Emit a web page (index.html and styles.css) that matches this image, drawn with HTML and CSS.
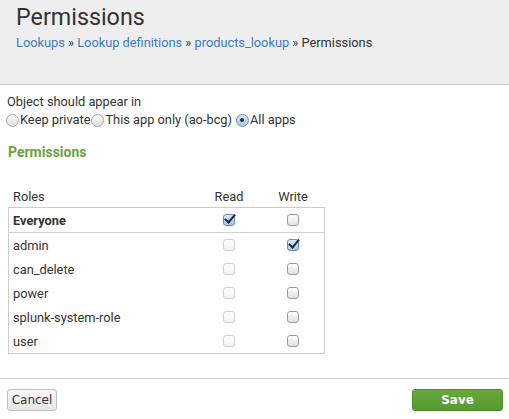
FILE: index.html
```html
<!DOCTYPE html>
<html>
<head>
<meta charset="utf-8">
<link rel="stylesheet" href="styles.css">
</head>
<body>
<div class="page">
  <header class="header">
    <h1 class="title">Permissions</h1>
    <div class="crumbs"><a>Lookups</a> » <a>Lookup definitions</a> » <a>products_lookup</a> » Permissions</div>
  </header>
  <main class="content">
    <div class="label">Object should appear in</div>
    <div class="radios">
      <span class="radio"></span><span class="rlabel">Keep private</span>
      <span class="radio"></span><span class="rlabel">This app only (ao-bcg)</span>
      <span class="radio on"></span><span class="rlabel">All apps</span>
    </div>
    <h2 class="section">Permissions</h2>
    <div class="perm">
      <div class="row head"><span class="name">Roles</span><span class="col">Read</span><span class="col">Write</span></div>
      <div class="box">
        <div class="row first"><span class="name bold">Everyone</span><span class="col"><span class="cb checked"></span></span><span class="col"><span class="cb"></span></span></div>
        <div class="row"><span class="name">admin</span><span class="col"><span class="cb dis"></span></span><span class="col"><span class="cb checked"></span></span></div>
        <div class="row"><span class="name">can_delete</span><span class="col"><span class="cb dis"></span></span><span class="col"><span class="cb"></span></span></div>
        <div class="row"><span class="name">power</span><span class="col"><span class="cb dis"></span></span><span class="col"><span class="cb"></span></span></div>
        <div class="row"><span class="name">splunk-system-role</span><span class="col"><span class="cb dis"></span></span><span class="col"><span class="cb"></span></span></div>
        <div class="row"><span class="name">user</span><span class="col"><span class="cb dis"></span></span><span class="col"><span class="cb"></span></span></div>
      </div>
    </div>
  </main>
  <footer class="footer">
    <button class="btn cancel">Cancel</button>
    <button class="btn save">Save</button>
  </footer>
</div>
</body>
</html>
```
FILE: styles.css
```css
* { box-sizing: border-box; }
html, body { margin: 0; padding: 0; }
body {
  font-family: Roboto, "Liberation Sans", sans-serif;
  font-size: 12.8px;
  color: #333;
  background: #fff;
}
.page {
  display: flex;
  flex-direction: column;
  min-height: 100vh;
}
.header {
  background: #eeeeee;
  height: 85px;
  border-bottom: 1px solid #cccccc;
  padding: 3px 16px 0;
}
.title {
  margin: 0;
  font-size: 23.3px;
  font-weight: 400;
  line-height: 28px;
  color: #333;
}
.crumbs {
  margin-top: 3px;
  line-height: 18px;
  color: #333;
}
.crumbs a { color: #3d7cc6; }
.content {
  padding: 8px 7px 0 6px;
}
.label { line-height: 18px; padding-left: 1px; }
.radios {
  display: flex;
  align-items: center;
  height: 18px;
}
.radio {
  width: 13px;
  height: 13px;
  border-radius: 50%;
  border: 1px solid #a8a8a8;
  background: linear-gradient(#fdfdfd, #dcdcdc);
  display: inline-flex;
  align-items: center;
  justify-content: center;
  margin-right: 1px;
  margin-left: 1px;
}
.radio:first-child { margin-left: 0; }
.radio.on {
  border-color: #6f8fb5;
  background: linear-gradient(#d6e6f7, #a9c7ea);
  margin-left: 4px;
}
.radio.on::after {
  content: "";
  width: 4px;
  height: 4px;
  border-radius: 50%;
  background: #1f2a38;
}
.rlabel { line-height: 18px; }
.section {
  margin: 14px 0 0 2px;
  font-size: 14px;
  font-weight: 700;
  line-height: 18px;
  color: #6aa23d;
}
.perm {
  width: 317px;
  margin: 26px 0 0 2px;
}
.row {
  display: flex;
  align-items: center;
  height: 24px;
}
.row.head { height: 18px; margin-bottom: 2px; }
.row.first { border-bottom: 1px solid #d0d0d0; height: 25px; }
.name { flex: 1; padding-left: 4px; }
.head .name { padding-left: 5px; }
.bold { font-weight: 700; }
.col {
  width: 64px;
  display: flex;
  justify-content: center;
}
.box {
  border: 1px solid #cccccc;
}
.box .col:last-child { width: 63px; }
.cb {
  position: relative;
  width: 12px;
  height: 12px;
  border: 1px solid #9c9c9c;
  border-radius: 3px;
  background: linear-gradient(#fdfdfd, #e2e2e2);
}
.cb.dis {
  border-color: #d2d2d2;
  background: linear-gradient(#fefefe, #f2f2f2);
}
.cb.checked {
  border-color: #6d8db3;
  background: linear-gradient(#d9e8f8, #a6c4e8);
}
.cb.checked::after {
  content: "";
  position: absolute;
  left: 3px;
  top: -3px;
  width: 4px;
  height: 9px;
  border-right: 2.5px solid #1d2b3c;
  border-bottom: 2.5px solid #1d2b3c;
  transform: rotate(40deg);
}
.footer {
  margin-top: auto;
  border-top: 1px solid #cccccc;
  height: 41px;
  padding: 10px 6px 0 7px;
  display: flex;
  justify-content: space-between;
  align-items: flex-start;
}
.btn {
  height: 22px;
  border-radius: 3px;
  font-family: "DejaVu Sans", sans-serif;
  font-size: 12px;
  padding: 0;
  cursor: pointer;
}
.cancel {
  width: 50px;
  color: #333;
  border: 1px solid #bdbdbd;
  background: linear-gradient(#f8f8f8, #e6e6e6);
}
.save {
  width: 91px;
  color: #fff;
  font-weight: 700;
  border: 1px solid #4d8a2a;
  background: linear-gradient(#67a83b, #579a2f);
}
```
